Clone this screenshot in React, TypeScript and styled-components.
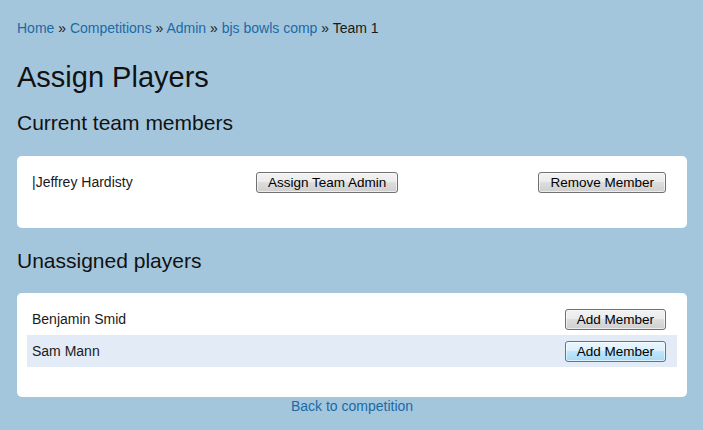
import React from "react";
import styled, { createGlobalStyle } from "styled-components";

const GlobalStyle = createGlobalStyle`
  html, body {
    margin: 0;
    padding: 0;
    background: #a4c6dd;
  }
  body {
    font-family: "Liberation Sans", Arial, sans-serif;
    font-size: 14px;
    color: #1a1a1a;
  }
`;

const Page = styled.div`
  padding: 18px 16px 0 17px;
`;

const Breadcrumb = styled.nav`
  font-size: 14px;
  line-height: 20px;
  color: #1a1a1a;
  white-space: pre;
`;

const Crumb = styled.a`
  color: #1b6aa5;
  text-decoration: none;
`;

const Title = styled.h1`
  margin: 22px 0 16px;
  font-size: 29px;
  line-height: 34px;
  font-weight: normal;
  color: #111;
`;

const SectionTitle = styled.h2<{ $gap?: number }>`
  margin: 0 0 ${(p) => p.$gap ?? 20}px;
  font-size: 21px;
  line-height: 26px;
  font-weight: normal;
  color: #111;
`;

const Card = styled.section`
  background: #ffffff;
  border-radius: 5px;
  padding: 10px 10px 30px;
  margin-bottom: 20px;
`;

const Row = styled.div<{ $cols: string; $highlight?: boolean }>`
  display: grid;
  grid-template-columns: ${(p) => p.$cols};
  align-items: center;
  height: 32px;
  padding: 0 11px 0 5px;
  background: ${(p) => (p.$highlight ? "#e3ebf7" : "transparent")};
`;

const Name = styled.span`
  font-size: 14px;
  color: #1a1a1a;
`;

const Button = styled.button<{ $hover?: boolean }>`
  justify-self: start;
  height: 21px;
  padding: 0 11px;
  font-family: "Liberation Sans", Arial, sans-serif;
  font-size: 13.5px;
  line-height: 19px;
  color: #000;
  border-radius: 3px;
  border: 1px solid ${(p) => (p.$hover ? "#3c7fb1" : "#707070")};
  background: ${(p) =>
    p.$hover
      ? "linear-gradient(to bottom, #eaf6fd 0%, #d9f0fc 50%, #bee6fd 50%, #a7d9f5 100%)"
      : "linear-gradient(to bottom, #f2f2f2 0%, #ebebeb 50%, #dddddd 50%, #cfcfcf 100%)"};
  box-shadow: inset 0 0 0 1px rgba(255, 255, 255, 0.6);
  cursor: pointer;
  white-space: nowrap;
`;

const EndButton = styled(Button)`
  justify-self: end;
`;

const Footer = styled.div`
  text-align: center;
  line-height: 18px;
  margin-top: -20px;
`;

const FooterLink = styled.a`
  color: #1b6aa5;
  text-decoration: none;
  font-size: 14px;
`;

const crumbs = ["Home", "Competitions", "Admin", "bjs bowls comp"];

const players = [
  { name: "Benjamin Smid", hover: false },
  { name: "Sam Mann", hover: true },
];

export default function App() {
  return (
    <>
      <GlobalStyle />
      <Page>
        <Breadcrumb>
          {crumbs.map((c) => (
            <React.Fragment key={c}>
              <Crumb href="#">{c}</Crumb>
              {" » "}
            </React.Fragment>
          ))}
          <span>Team 1</span>
        </Breadcrumb>
        <Title>Assign Players</Title>
        <SectionTitle>Current team members</SectionTitle>
        <Card>
          <Row $cols="224px 1fr auto">
            <Name>|Jeffrey Hardisty</Name>
            <Button>Assign Team Admin</Button>
            <EndButton>Remove Member</EndButton>
          </Row>
        </Card>
        <SectionTitle $gap={19}>Unassigned players</SectionTitle>
        <Card>
          {players.map((p) => (
            <Row key={p.name} $cols="1fr auto" $highlight={p.hover}>
              <Name>{p.name}</Name>
              <EndButton $hover={p.hover}>Add Member</EndButton>
            </Row>
          ))}
        </Card>
        <Footer>
          <FooterLink href="#">Back to competition</FooterLink>
        </Footer>
      </Page>
    </>
  );
}
